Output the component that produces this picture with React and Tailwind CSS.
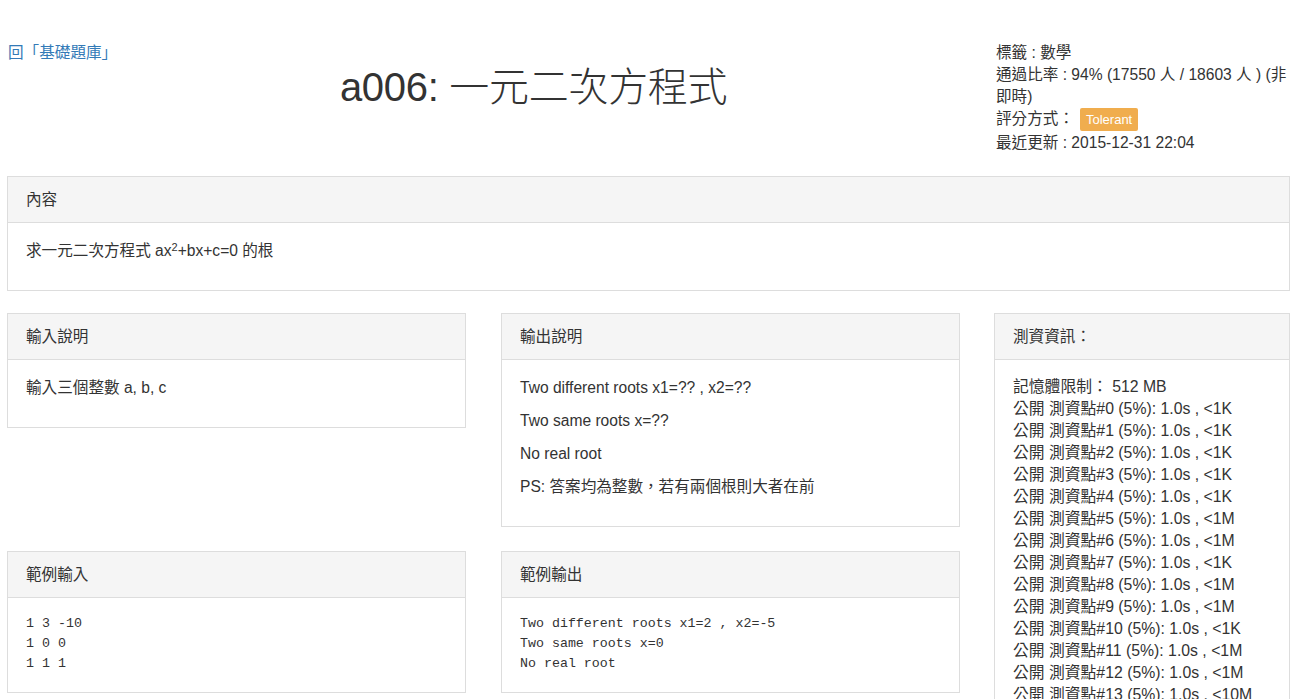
export default function App() {
  const font = { fontFamily: '"Liberation Sans", "Noto Sans CJK TC", sans-serif' };
  const tests = [
    ["0", "<1K"], ["1", "<1K"], ["2", "<1K"], ["3", "<1K"], ["4", "<1K"],
    ["5", "<1M"], ["6", "<1M"], ["7", "<1K"], ["8", "<1M"], ["9", "<1M"],
    ["10", "<1K"], ["11", "<1M"], ["12", "<1M"], ["13", "<10M"],
  ];

  return (
    <div className="min-h-screen bg-white text-[#333] text-[15.6px]" style={font}>
      {/* header */}
      <div className="flex items-start pt-[42px] pl-[8px]">
        <a href="#" className="text-[#337ab7] leading-[22px] whitespace-nowrap">回「基礎題庫」</a>
        <div className="flex-1 text-center mr-[44px] pt-[25px]">
          <h1 className="text-[40px] font-normal leading-[40px] tracking-[-0.3px]">
            a006: <span className="font-light">一元二次方程式</span>
          </h1>
        </div>
        <div className="w-[296px] mr-[24px] pl-[2px] leading-[22px]">
          <div>標籤 : 數學</div>
          <div>通過比率 : 94% (17550 人 / 18603 人 ) (非即時)</div>
          <div className="flex items-center h-[22px]">
            評分方式：
            <span className="ml-[6px] bg-[#f0ad4e] text-white text-[13px] h-[23px] leading-[23px] px-[6px] rounded-[2px]">Tolerant</span>
          </div>
          <div className="mt-[2px]">最近更新 : 2015-12-31 22:04</div>
        </div>
      </div>

      {/* content */}
      <div className="mt-[22px] ml-[7px] mr-[24px] border border-[#ddd]">
        <div className="bg-[#f5f5f5] border-b border-[#ddd] h-[46px] flex items-center px-[18px]">內容</div>
        <div className="px-[18px] pt-[16px] pb-[18px]">
          <p className="leading-[23px] mb-[10px]">
            求一元二次方程式 ax<sup className="text-[11px]">2</sup>+bx+c=0 的根
          </p>
        </div>
      </div>

      <div className="flex items-start mt-[22px] ml-[7px] mr-[24px] gap-[34px]">
        <div className="w-[953px] grid grid-cols-2 gap-x-[35px] gap-y-[24px] items-start">
          <Panel title="輸入說明">
            <p className="leading-[23px] mb-[10px]">輸入三個整數 a, b, c</p>
          </Panel>
          <Panel title="輸出說明">
            <p className="leading-[23px] mb-[10px]">Two different roots x1=?? , x2=??</p>
            <p className="leading-[23px] mb-[10px]">Two same roots x=??</p>
            <p className="leading-[23px] mb-[10px]">No real root</p>
            <p className="leading-[23px] mb-[10px]">PS: 答案均為整數，若有兩個根則大者在前</p>
          </Panel>
          <Panel title="範例輸入">
            <pre className="text-[13.3px] leading-[20px]" style={{ fontFamily: '"Liberation Mono", monospace' }}>{"1 3 -10\n1 0 0\n1 1 1"}</pre>
          </Panel>
          <Panel title="範例輸出">
            <pre className="text-[13.3px] leading-[20px]" style={{ fontFamily: '"Liberation Mono", monospace' }}>{"Two different roots x1=2 , x2=-5\nTwo same roots x=0\nNo real root"}</pre>
          </Panel>
        </div>
        <div className="flex-1 border border-[#ddd]">
          <div className="bg-[#f5f5f5] border-b border-[#ddd] h-[46px] flex items-center px-[18px]">測資資訊：</div>
          <div className="px-[18px] pt-[16px] pb-[18px] text-[15.8px] leading-[22px]">
            <div>記憶體限制： 512 MB</div>
            {tests.map(([n, m]) => (
              <div key={n}>公開 測資點#{n} (5%): 1.0s , {m}</div>
            ))}
          </div>
        </div>
      </div>
    </div>
  );
}

function Panel({ title, children }) {
  return (
    <div className="border border-[#ddd]">
      <div className="bg-[#f5f5f5] border-b border-[#ddd] h-[46px] flex items-center px-[18px]">{title}</div>
      <div className="px-[18px] pt-[16px] pb-[18px]">{children}</div>
    </div>
  );
}
